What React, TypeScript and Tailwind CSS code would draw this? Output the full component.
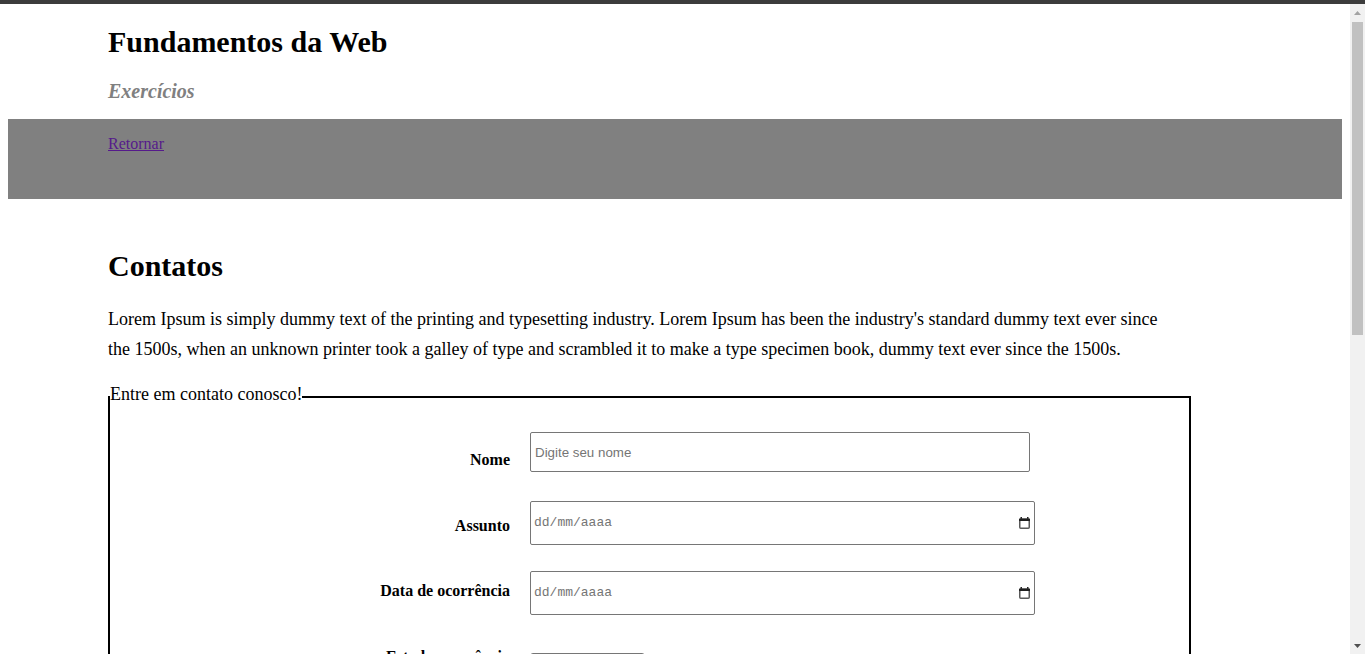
import React from "react";

function CalendarIcon() {
  return (
    <svg width="11" height="12" viewBox="0 0 11 12" aria-hidden="true">
      <rect x="1.5" y="0" width="1.5" height="2.5" fill="#1f1f1f" />
      <rect x="8" y="0" width="1.5" height="2.5" fill="#1f1f1f" />
      <rect x="0.75" y="2.25" width="9.5" height="9" rx="1" fill="none" stroke="#5a5a5a" strokeWidth="1.5" />
      <rect x="0" y="1.5" width="11" height="2.6" rx="0.6" fill="#1f1f1f" />
    </svg>
  );
}

function DateField() {
  return (
    <div className="ml-[20px] flex h-[44px] w-[505px] items-center justify-between rounded-[2px] border border-[#767676] bg-white pl-[3px] pr-[4px]">
      <span className="font-['Liberation_Mono',monospace] text-[13px] text-[#757575]">dd/mm/aaaa</span>
      <CalendarIcon />
    </div>
  );
}

export default function App() {
  return (
    <div className="flex h-[654px] w-[1365px] flex-col overflow-hidden bg-white font-['Liberation_Serif','Times_New_Roman',serif] text-black">
      <div className="h-[4px] shrink-0 bg-[#3c3c3c]" />
      <div className="flex min-h-0 flex-1">
        <main className="min-w-0 flex-1 overflow-hidden px-[8px]">
          <header className="px-[100px] pt-[21px]">
            <h1 className="text-[30px] font-bold leading-[34px]">Fundamentos da Web</h1>
            <p className="mt-[20px] text-[20px] font-bold italic leading-[24px] text-[#808080]">Exercícios</p>
          </header>
          <nav className="mt-[16px] h-[80px] bg-[#808080] px-[100px] pt-[13px]">
            <a href="#" className="text-[16px] leading-[20px] text-[#551a8b] underline">
              Retornar
            </a>
          </nav>
          <section className="px-[100px] pt-[50px]">
            <h2 className="text-[30px] font-bold leading-[34px]">Contatos</h2>
            <p className="mt-[21px] w-[1084px] text-[18px] leading-[30px]">
              Lorem Ipsum is simply dummy text of the printing and typesetting industry. Lorem Ipsum has been the industry's standard dummy text ever since
              <br />
              the 1500s, when an unknown printer took a galley of type and scrambled it to make a type specimen book, dummy text ever since the 1500s.
            </p>
            <fieldset className="mt-[20px] w-[1083px] border-2 border-black pb-[40px] pt-[23px]">
              <legend className="p-0 pb-[4px] text-[18px] leading-[21px]">Entre em contato conosco!</legend>
              <div className="flex items-start">
                <label className="w-[400px] pt-[18px] text-right text-[16px] font-bold leading-[20px]">Nome</label>
                <input
                  type="text"
                  placeholder="Digite seu nome"
                  className="ml-[20px] h-[40px] w-[500px] rounded-[2px] border border-[#767676] bg-white pl-[4px] font-['Liberation_Sans',Arial,sans-serif] text-[13.33px] text-black outline-none placeholder:text-[#757575]"
                />
              </div>
              <div className="mt-[29px] flex items-start">
                <label className="w-[400px] pt-[15px] text-right text-[16px] font-bold leading-[20px]">Assunto</label>
                <DateField />
              </div>
              <div className="mt-[26px] flex items-start">
                <label className="w-[400px] pt-[10px] text-right text-[16px] font-bold leading-[20px]">Data de ocorrência</label>
                <DateField />
              </div>
              <div className="mt-[32px] flex items-start">
                <label className="w-[400px] text-right text-[16px] font-bold leading-[20px]">Estado ocorrência</label>
                <div className="ml-[20px] mt-[6px] h-[22px] w-[115px] rounded-[3px] border border-[#767676] bg-white" />
              </div>
            </fieldset>
          </section>
        </main>
        <div className="flex w-[15px] shrink-0 flex-col bg-[#f1f1f1]">
          <div className="flex h-[17px] items-center justify-center">
            <svg width="7" height="4" viewBox="0 0 7 4" aria-hidden="true">
              <polygon points="0,4 7,4 3.5,0" fill="#a3a3a3" />
            </svg>
          </div>
          <div className="ml-[2px] mt-[1px] h-[313px] w-[11px] bg-[#c1c1c1]" />
          <div className="flex-1" />
          <div className="flex h-[17px] items-center justify-center">
            <svg width="7" height="4" viewBox="0 0 7 4" aria-hidden="true">
              <polygon points="0,0 7,0 3.5,4" fill="#505050" />
            </svg>
          </div>
        </div>
      </div>
    </div>
  );
}
